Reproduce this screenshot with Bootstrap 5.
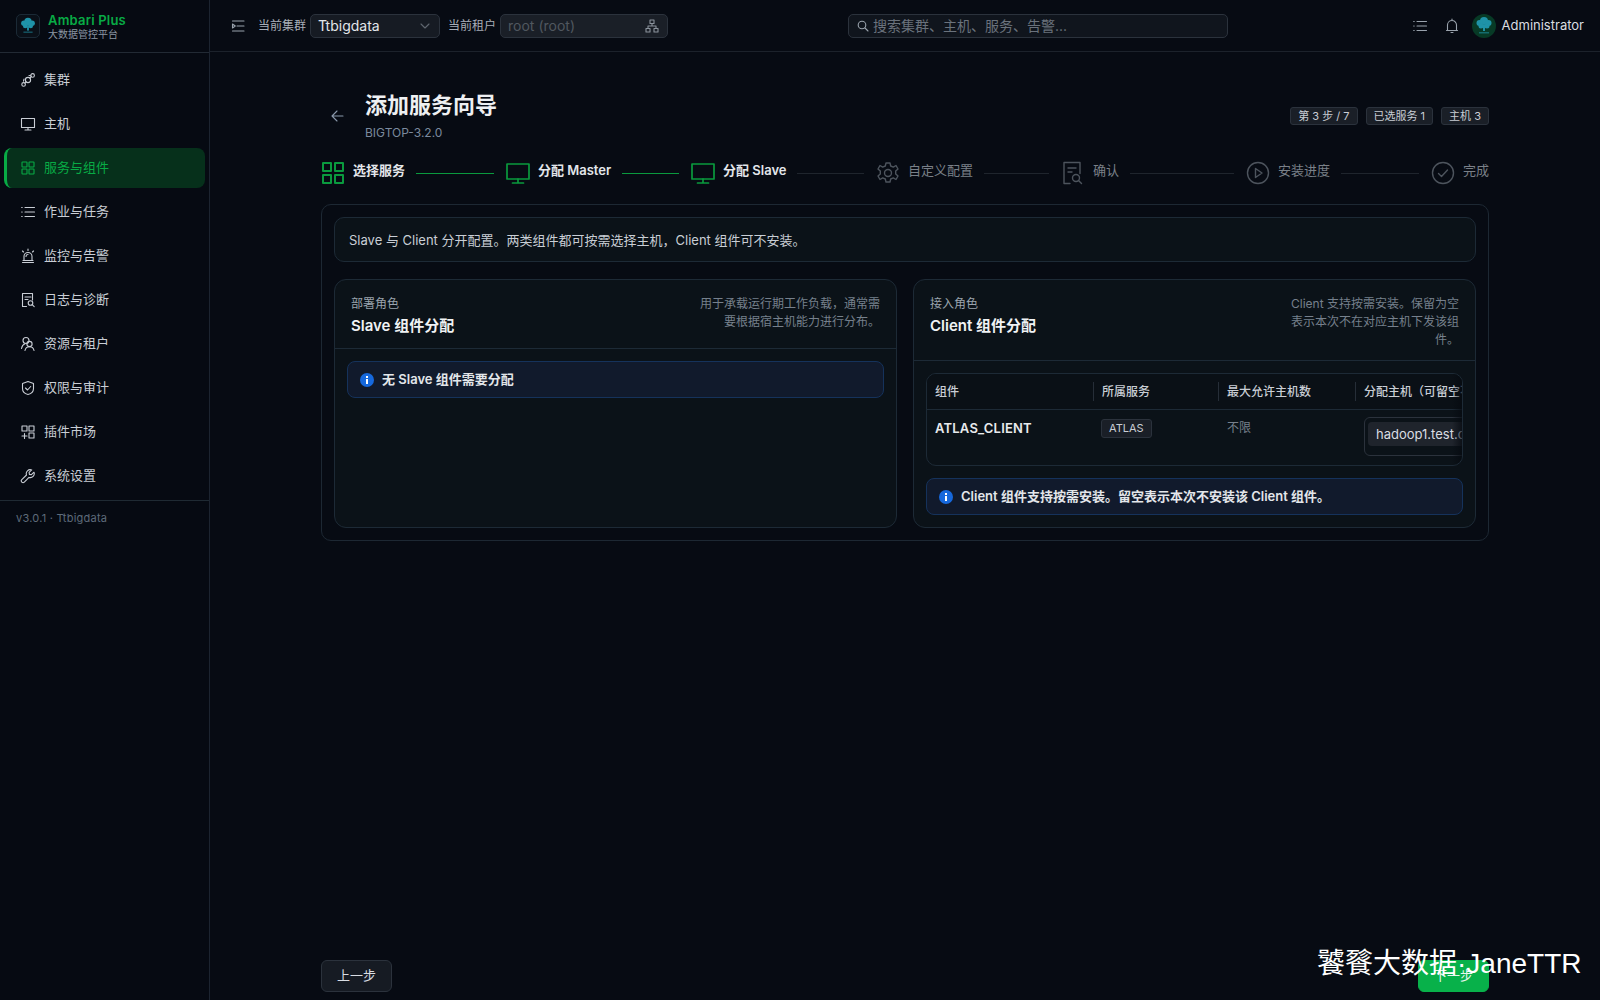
<!DOCTYPE html>
<html lang="zh-CN">
<head>
    <meta charset="UTF-8">
    <meta name="viewport" content="width=device-width, initial-scale=1.0">
    <title>添加服务向导</title>
    <link href="https://cdn.jsdelivr.net/npm/bootstrap@5.3.0/dist/css/bootstrap.min.css" rel="stylesheet">
    <style>
        html, body { height: 100%; }
        body {
            background: #070b13;
            color: #d9dde3;
            font-family: Inter, "Noto Sans CJK SC", sans-serif;
            font-size: 13px;
        }
        svg { display: block; flex: none; }
        .ic { fill: none; stroke: currentColor; stroke-width: 1.1; stroke-linecap: round; stroke-linejoin: round; }

        .app-shell { height: 1000px; overflow: hidden; }
        .side-panel { width: 210px; flex: none; background: #060a12; border-right: 1px solid #1c2430; }
        .brand-box { height: 53px; padding: 0 16px; border-bottom: 1px solid #222a34; }
        .brand-logo { width: 24px; height: 24px; border: 1px solid #1b2a36; border-radius: 5px; background: #0a1018; }
        .brand-name { color: #08ab45; font-size: 13px; font-weight: 600; line-height: 14px; letter-spacing: .2px; }
        .brand-sub { color: #8b96a3; font-size: 10px; line-height: 12px; margin-top: 1px; }
        .side-nav { padding: 7px 4px 4px; gap: 4px; }
        .side-link { height: 40px; padding: 0 16px; gap: 8px; color: #c9ced5; border-radius: 8px; text-decoration: none; font-size: 13px; }
        .side-link.is-active { background: #06301b; color: #08ab45; border-left: 3px solid #08ab45; padding-left: 13px; }
        .side-foot { border-top: 1px solid #1f2a33; padding: 8px 16px; color: #5e6b7a; font-size: 11px; line-height: 18px; letter-spacing: .25px; }

        .top-strip { height: 52px; flex: none; padding: 0 16px 0 20px; border-bottom: 1px solid #1c222b; }
        .top-label { color: #a7aeb7; font-size: 12px; white-space: nowrap; }
        .cluster-select {
            width: 130px; height: 24px; padding: 0 8px 0 7px; font-size: 14px; line-height: 22px;
            color: #e3e6ea; background: #161b23; border: 1px solid #2b323c; border-radius: 5px;
        }
        .cluster-select.is-off { width: 168px; color: #50575f; background: #1a1f27; }
        .chev { color: #5f666f; }
        .search-box {
            width: 380px; height: 24px; padding: 0 7px 1px; gap: 3px; background: #10151d;
            border: 1px solid #2b323c; border-radius: 5px; color: #6a727c; font-size: 14px;
            position: absolute; left: 848px; top: 14px;
        }
        .user-name { color: #dadde1; font-size: 13px; margin-left: 6px; }
        .user-face { width: 24px; height: 24px; margin-left: 12px; border-radius: 50%; background: #073a26; overflow: hidden; }
        .top-icon { color: #9aa3ad; }

        .page-body { padding: 38px 111px 8px; min-width: 0; }
        .page-title { font-size: 22px; font-weight: 600; line-height: 30px; color: #eef0f2; margin: 0; }
        .page-sub { color: #7b8a9d; font-size: 12px; line-height: 18px; margin-top: 4px; }
        .back-mark { color: #8a99ab; margin-left: 1px; margin-right: 15px; }
        .tag-pill {
            background: #1a1f27; border: 1px solid #2b323c; border-radius: 3px; color: #c9ced5;
            font-size: 11px; font-weight: 400; line-height: 16px; padding: 0 7px; white-space: nowrap;
        }
        .head-tags { gap: 8px; margin-top: 17px; }

        .step-row { margin-top: 18px; height: 26px; }
        .step-cell { flex: 1 1 0; gap: 8px; padding-right: 12px; min-width: 0; color: #7a8088; }
        .step-cell:last-child { flex: 0 0 auto; padding-right: 0; }
        .step-cell.is-done { color: #e3e6ea; font-weight: 600; }
        .step-cell.is-done svg { color: #0a9a3e; }
        .step-cell svg { color: #4d545d; }
        .step-name { white-space: nowrap; margin-top: -4px; }
        .step-bar { flex: 1; height: 1px; background: #1f252d; margin-left: 3px; }
        .step-cell.is-done .step-bar { background: #0a9a3e; }
        .step-cell.is-done .step-bar.is-pending { background: #1f252d; }

        .outer-panel { margin-top: 18px; padding: 12px; border: 1px solid #1d2833; border-radius: 10px; }
        .note-strip { height: 45px; padding: 2px 14px 0; background: #0b1218; border: 1px solid #1d2a36; border-radius: 10px; color: #c9ced5; }
        .panel-grid { margin-top: 17px; gap: 16px; }
        .role-panel { flex: 1 1 0; min-width: 0; height: 249px; background: #0b1218; border: 1px solid #1d2a36; border-radius: 12px; }
        .role-head { padding: 15px 16px 0; border-bottom: 1px solid #1d2a36; }
        .role-kicker { color: #9aa3ad; font-size: 12px; line-height: 18px; }
        .role-title { color: #f0f2f4; font-size: 15px; font-weight: 600; line-height: 22px; margin-top: 2px; }
        .role-desc { width: 180px; flex: none; text-align: right; color: #76808c; font-size: 12px; line-height: 18px; }
        .role-desc.is-narrow { width: 172px; }
        .role-body { padding: 12px; }
        .info-strip {
            height: 37px; padding: 0 12px; gap: 8px; margin: 0; background: #111a2c; border: 1px solid #15325b;
            border-radius: 8px; color: #e3e6ea; font-size: 13px; font-weight: 600;
        }
        .grid-clip { position: relative; height: 93px; overflow: hidden; border: 1px solid #1d2a36; border-radius: 10px; margin-bottom: 12px; }
        .grid-fade { position: absolute; top: 0; right: 0; bottom: 0; width: 10px; background: linear-gradient(to right, rgba(6,10,16,0), rgba(6,10,16,.75)); }
        .host-grid { table-layout: fixed; width: 689px; margin: 0; --bs-table-bg: transparent; --bs-table-color: #d9dde3; --bs-table-border-color: #1d2a36; }
        .host-grid th {
            position: relative; height: 35px; padding: 1px 8px 0; vertical-align: middle; font-size: 12px; font-weight: 500;
            color: #c9ced5; background: #0a1016; white-space: nowrap;
        }
        .host-grid th + th::before { content: ""; position: absolute; left: -1px; top: 8px; bottom: 8px; width: 1px; background: #262e38; }
        .host-grid td { padding: 9px 8px 8px; border-bottom: 0; vertical-align: top; }
        .comp-name { font-size: 13px; font-weight: 600; color: #e8eaed; line-height: 18px; letter-spacing: .2px; }
        .svc-tag { display: inline-block; font-size: 11px; line-height: 17px; padding: 0 7px; background: #1a1f27; border: 1px solid #2b323c; border-radius: 3px; color: #c9ced5; vertical-align: top; margin-left: -1px; }
        .limit-text { color: #76808c; font-size: 12px; line-height: 18px; }
        .host-picker { width: 240px; height: 39px; margin-top: -2px; padding: 4px 3px; border: 1px solid #2b323c; border-radius: 6px; }
        .host-chip { display: inline-block; height: 24px; padding: 0 8px; background: #1f242c; border-radius: 4px; color: #d9dde3; font-size: 13px; line-height: 24px; white-space: nowrap; }

        .foot-row { margin-top: auto; }
        .btn-prev, .btn-next { width: 71px; height: 32px; padding: 0; font-size: 13px; border-radius: 6px; }
        .btn-prev { background: #161b23; border: 1px solid #2b323c; color: #d9dde3; }
        .btn-next { background: #08b14a; border: 1px solid #08b14a; color: #e8f6ee; }
        .water-mark {
            position: absolute; left: 1317px; top: 945px; color: #fff; font-size: 28px; line-height: 38px;
            font-family: "Liberation Sans", "Noto Sans CJK SC", sans-serif; white-space: nowrap;
        }
    </style>
</head>
<body>
    <svg width="0" height="0" class="position-absolute">
        <symbol id="i-cluster" viewBox="0 0 16 16"><circle cx="3.6" cy="12.4" r="1.8"/><circle cx="12.6" cy="3.4" r="1.8"/><circle cx="8" cy="8" r="2.6"/><path d="M5 11l1.200-1.200M9.900 6.100L11.300 4.700M9 3.500l1.800.3M3.500 9.100l.5-2"/></symbol>
        <symbol id="i-desktop" viewBox="0 0 16 16"><rect x="1.500" y="2.500" width="13" height="9"/><path d="M8 11.500v2.500M5 14h6"/></symbol>
        <symbol id="i-grid" viewBox="0 0 16 16"><rect x="2" y="2" width="5" height="5" rx=".5"/><rect x="9" y="2" width="5" height="5" rx=".5"/><rect x="2" y="9" width="5" height="5" rx=".5"/><rect x="9" y="9" width="5" height="5" rx=".5"/></symbol>
        <symbol id="i-list" viewBox="0 0 16 16"><path d="M5 3.500h9.500M5 8h9.500M5 12.500h9.500M1.700 3.500h.5M1.700 8h.5M1.700 12.500h.5"/></symbol>
        <symbol id="i-indent" viewBox="0 0 16 16"><path d="M2.500 3h11.500M7 8h7M2.500 13h11.500"/><path d="M2.500 6l2.800 2-2.800 2z"/></symbol>
        <symbol id="i-alert" viewBox="0 0 16 16"><path d="M4 12.500V8.500a4 4 0 018 0v4M2.500 14.500h11M3 12.500h10M8 1v1.500M2.500 3l1 1M13.500 3l-1 1M6 8.500a2 2 0 012-2"/></symbol>
        <symbol id="i-filesearch" viewBox="0 0 16 16"><path d="M6.500 14.500H2.500v-13h10v6.500M5 5h6M5 7.500h3"/><circle cx="10.500" cy="11" r="2.300"/><path d="M12.200 12.700l2 2"/></symbol>
        <symbol id="i-users" viewBox="0 0 16 16"><circle cx="6" cy="4.500" r="3"/><circle cx="9.500" cy="8" r="2.600"/><path d="M1.500 12.500c.5-2.500 1.800-4.200 3.500-4.800M5 14.500c.4-2.400 2.200-3.800 4.500-3.800s4.100 1.400 4.500 3.800"/></symbol>
        <symbol id="i-shield" viewBox="0 0 16 16"><path d="M8 1.500l5.500 2v5c0 3.200-2.500 5.300-5.500 6-3-.7-5.500-2.800-5.500-6v-5z"/><path d="M5.500 8l2 2 3.200-3.500"/></symbol>
        <symbol id="i-plugin" viewBox="0 0 16 16"><rect x="2" y="2" width="5" height="5"/><rect x="9" y="2" width="5" height="5"/><rect x="9" y="9" width="5" height="5"/><path d="M4.500 9.500v5M2 12h5"/></symbol>
        <symbol id="i-tool" viewBox="0 0 16 16"><path d="M14 4.200l-2.600 2.500-2-.3-.3-2L11.700 1.900A4 4 0 006.500 7L1.800 11.600a1.600 1.600 0 002.500 2.500L9 9.400a4 4 0 005-5.200z"/></symbol>
        <symbol id="i-tree" viewBox="0 0 24 24"><g fill="#1f93a8"><circle cx="12" cy="7" r="4"/><circle cx="7.500" cy="9" r="3"/><circle cx="16.500" cy="9" r="3"/><circle cx="9" cy="12" r="2.500"/><circle cx="15" cy="12" r="2.500"/><rect x="11" y="11" width="2" height="6"/><rect x="7" y="18" width="10" height="1.500" opacity=".55"/></g></symbol>
        <symbol id="i-gear" viewBox="0 0 24 24"><circle cx="12" cy="12" r="3.500"/><path d="M10 2h4l.7 3 2.600 1.100 2.700-1.600 2 3.500-2.300 2.100v2.800l2.300 2.100-2 3.500-2.700-1.600-2.600 1.100-.7 3h-4l-.7-3-2.600-1.100L4 18.500 2 15l2.300-2.100v-2.800L2 8l2-3.500 2.700 1.600L9.300 5z"/></symbol>
        <symbol id="i-confirm" viewBox="0 0 24 24"><path d="M9 22.500H3v-21h16v11M7 7h8M7 11h4"/><circle cx="15" cy="17" r="3.500"/><path d="M17.500 19.500l3 3"/></symbol>
        <symbol id="i-play" viewBox="0 0 24 24"><circle cx="12" cy="12" r="10.500"/><path d="M9.500 7.500l6.500 4.500-6.500 4.500z"/></symbol>
        <symbol id="i-check" viewBox="0 0 24 24"><circle cx="12" cy="12" r="10.500"/><path d="M7.500 12.500l3 3 6-6.500"/></symbol>
        <symbol id="i-info" viewBox="0 0 14 14"><circle cx="7" cy="7" r="7" fill="#1668dc"/><rect x="6" y="6" width="2" height="5" fill="#fff"/><rect x="6" y="3" width="2" height="2" fill="#fff"/></symbol>
    </svg>

    <div class="app-shell d-flex position-relative">
        <aside class="side-panel d-flex flex-column">
            <div class="brand-box d-flex align-items-center gap-2">
                <div class="brand-logo"><svg width="22" height="22"><use href="#i-tree"/></svg></div>
                <div>
                    <div class="brand-name">Ambari Plus</div>
                    <div class="brand-sub">大数据管控平台</div>
                </div>
            </div>
            <nav class="side-nav nav flex-column">
                <a class="side-link d-flex align-items-center" href="#"><svg class="ic" width="16" height="16"><use href="#i-cluster"/></svg>集群</a>
                <a class="side-link d-flex align-items-center" href="#"><svg class="ic" width="16" height="16"><use href="#i-desktop"/></svg>主机</a>
                <a class="side-link is-active d-flex align-items-center" href="#"><svg class="ic" width="16" height="16"><use href="#i-grid"/></svg>服务与组件</a>
                <a class="side-link d-flex align-items-center" href="#"><svg class="ic" width="16" height="16"><use href="#i-list"/></svg>作业与任务</a>
                <a class="side-link d-flex align-items-center" href="#"><svg class="ic" width="16" height="16"><use href="#i-alert"/></svg>监控与告警</a>
                <a class="side-link d-flex align-items-center" href="#"><svg class="ic" width="16" height="16"><use href="#i-filesearch"/></svg>日志与诊断</a>
                <a class="side-link d-flex align-items-center" href="#"><svg class="ic" width="16" height="16"><use href="#i-users"/></svg>资源与租户</a>
                <a class="side-link d-flex align-items-center" href="#"><svg class="ic" width="16" height="16"><use href="#i-shield"/></svg>权限与审计</a>
                <a class="side-link d-flex align-items-center" href="#"><svg class="ic" width="16" height="16"><use href="#i-plugin"/></svg>插件市场</a>
                <a class="side-link d-flex align-items-center" href="#"><svg class="ic" width="16" height="16"><use href="#i-tool"/></svg>系统设置</a>
            </nav>
            <div class="side-foot">v3.0.1 · Ttbigdata</div>
        </aside>

        <div class="d-flex flex-column flex-grow-1" style="min-width:0">
            <header class="top-strip d-flex align-items-center">
                <svg class="ic top-icon me-2" width="16" height="16"><use href="#i-indent"/></svg>
                <span class="top-label ms-1 me-1">当前集群</span>
                <div class="cluster-select d-flex align-items-center justify-content-between">Ttbigdata
                    <svg class="ic chev" width="12" height="12" viewBox="0 0 12 12"><path d="M2 4l4 4 4-4"/></svg>
                </div>
                <span class="top-label ms-2 me-1">当前租户</span>
                <div class="cluster-select is-off d-flex align-items-center justify-content-between">root (root)
                    <svg class="ic" width="14" height="14" viewBox="0 0 14 14" style="color:#8a929c"><rect x="5" y="1" width="4" height="3.500"/><rect x="1" y="9.500" width="4" height="3.500"/><rect x="9" y="9.500" width="4" height="3.500"/><path d="M7 4.500V7M3 9.500V7h8v2.500"/></svg>
                </div>
                <div class="search-box d-flex align-items-center">
                    <svg class="ic" width="14" height="14" viewBox="0 0 14 14" style="color:#9aa3ad"><circle cx="6" cy="6" r="3.800"/><path d="M9 9l3 3"/></svg>
                    搜索集群、主机、服务、告警...
                </div>
                <div class="ms-auto d-flex align-items-center">
                    <svg class="ic top-icon" width="16" height="16"><use href="#i-list"/></svg>
                    <svg class="ic top-icon" width="16" height="16" viewBox="0 0 16 16" style="margin-left:16px"><path d="M3.500 12.500V7a4.500 4.500 0 019 0v5.500M2.500 12.500h11M7 14.500h2M8 1v1.500"/></svg>
                    <div class="user-face"><svg width="24" height="24"><use href="#i-tree"/></svg></div>
                    <span class="user-name">Administrator</span>
                </div>
            </header>

            <main class="page-body d-flex flex-column flex-grow-1">
                <div class="d-flex align-items-start">
                    <svg class="ic back-mark align-self-center" width="28" height="14" viewBox="0 0 28 14"><path d="M21 7H10M15 2L10 7l5 5"/></svg>
                    <div class="flex-grow-1">
                        <h1 class="page-title">添加服务向导</h1>
                        <div class="page-sub">BIGTOP-3.2.0</div>
                    </div>
                    <div class="head-tags d-flex">
                        <span class="tag-pill">第 3 步 / 7</span>
                        <span class="tag-pill">已选服务 1</span>
                        <span class="tag-pill">主机 3</span>
                    </div>
                </div>

                <div class="step-row d-flex align-items-center">
                    <div class="step-cell is-done d-flex align-items-center">
                        <svg class="ic" width="24" height="24" viewBox="0 0 24 24" style="stroke-width:2"><rect x="2" y="2" width="8" height="8"/><rect x="14" y="2" width="8" height="8"/><rect x="2" y="14" width="8" height="8"/><rect x="14" y="14" width="8" height="8"/></svg>
                        <span class="step-name">选择服务</span><span class="step-bar"></span>
                    </div>
                    <div class="step-cell is-done d-flex align-items-center">
                        <svg class="ic" width="24" height="24" viewBox="0 0 24 24" style="stroke-width:1.700"><rect x="1" y="3" width="22" height="15"/><path d="M12 18v4M6.500 22h11"/></svg>
                        <span class="step-name">分配 Master</span><span class="step-bar"></span>
                    </div>
                    <div class="step-cell is-done d-flex align-items-center">
                        <svg class="ic" width="24" height="24" viewBox="0 0 24 24" style="stroke-width:1.700"><rect x="1" y="3" width="22" height="15"/><path d="M12 18v4M6.500 22h11"/></svg>
                        <span class="step-name">分配 Slave</span><span class="step-bar is-pending"></span>
                    </div>
                    <div class="step-cell d-flex align-items-center">
                        <svg class="ic" width="24" height="24" style="stroke-width:1.400"><use href="#i-gear"/></svg>
                        <span class="step-name">自定义配置</span><span class="step-bar"></span>
                    </div>
                    <div class="step-cell d-flex align-items-center">
                        <svg class="ic" width="24" height="24" style="stroke-width:1.400"><use href="#i-confirm"/></svg>
                        <span class="step-name">确认</span><span class="step-bar"></span>
                    </div>
                    <div class="step-cell d-flex align-items-center">
                        <svg class="ic" width="24" height="24" style="stroke-width:1.400"><use href="#i-play"/></svg>
                        <span class="step-name">安装进度</span><span class="step-bar"></span>
                    </div>
                    <div class="step-cell d-flex align-items-center">
                        <svg class="ic" width="24" height="24" style="stroke-width:1.400"><use href="#i-check"/></svg>
                        <span class="step-name">完成</span>
                    </div>
                </div>

                <section class="outer-panel">
                    <div class="note-strip d-flex align-items-center">Slave 与 Client 分开配置。两类组件都可按需选择主机，Client 组件可不安装。</div>
                    <div class="panel-grid d-flex">
                        <div class="role-panel">
                            <div class="role-head d-flex justify-content-between" style="height:69px">
                                <div>
                                    <div class="role-kicker">部署角色</div>
                                    <div class="role-title">Slave 组件分配</div>
                                </div>
                                <div class="role-desc">用于承载运行期工作负载，通常需要根据宿主机能力进行分布。</div>
                            </div>
                            <div class="role-body">
                                <div class="info-strip alert d-flex align-items-center"><svg width="14" height="14"><use href="#i-info"/></svg>无 Slave 组件需要分配</div>
                            </div>
                        </div>
                        <div class="role-panel">
                            <div class="role-head d-flex justify-content-between" style="height:81px">
                                <div>
                                    <div class="role-kicker">接入角色</div>
                                    <div class="role-title">Client 组件分配</div>
                                </div>
                                <div class="role-desc is-narrow">Client 支持按需安装。保留为空表示本次不在对应主机下发该组件。</div>
                            </div>
                            <div class="role-body">
                                <div class="grid-clip">
                                    <table class="table host-grid">
                                        <colgroup><col style="width:167px"><col style="width:125px"><col style="width:137px"><col style="width:260px"></colgroup>
                                        <thead><tr><th>组件</th><th>所属服务</th><th>最大允许主机数</th><th>分配主机（可留空不安装）</th></tr></thead>
                                        <tbody><tr>
                                            <td class="comp-name">ATLAS_CLIENT</td>
                                            <td><span class="svc-tag">ATLAS</span></td>
                                            <td class="limit-text">不限</td>
                                            <td><div class="host-picker"><span class="host-chip">hadoop1.test.com</span></div></td>
                                        </tr></tbody>
                                    </table>
                                    <div class="grid-fade"></div>
                                </div>
                                <div class="info-strip alert d-flex align-items-center"><svg width="14" height="14"><use href="#i-info"/></svg>Client 组件支持按需安装。留空表示本次不安装该 Client 组件。</div>
                            </div>
                        </div>
                    </div>
                </section>

                <div class="foot-row d-flex justify-content-between">
                    <button type="button" class="btn btn-prev">上一步</button>
                    <button type="button" class="btn btn-next">下一步</button>
                </div>
            </main>
        </div>
        <div class="water-mark">饕餮大数据·JaneTTR</div>
    </div>
    <script src="https://cdn.jsdelivr.net/npm/bootstrap@5.3.0/dist/js/bootstrap.bundle.min.js"></script>
</body>
</html>
